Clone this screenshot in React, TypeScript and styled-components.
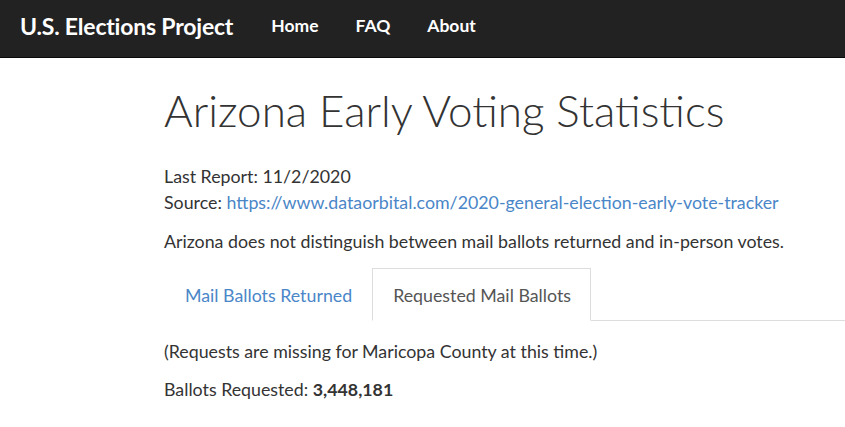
import styled, { createGlobalStyle } from "styled-components";
import { useState } from "react";

const GlobalStyle = createGlobalStyle`
  body {
    margin: 0;
    background: #fff;
    font-family: Lato, "Liberation Sans", sans-serif;
    color: #333;
    overflow: hidden;
  }
`;

const NavBar = styled.nav`
  display: flex;
  align-items: center;
  height: 58px;
  box-sizing: border-box;
  background: #222;
  border-bottom: 1px solid #0a0a0a;
  padding: 0 20px 6px;
`;

const Brand = styled.a`
  color: #fff;
  font-size: 23px;
  font-weight: 700;
  letter-spacing: -0.2px;
  text-decoration: none;
  margin-right: 38px;
`;

const NavLinks = styled.div`
  display: flex;
  gap: 37px;
`;

const NavLink = styled.a`
  color: #fff;
  font-size: 17.5px;
  font-weight: 700;
  text-decoration: none;
`;

const Container = styled.main`
  padding: 28px 0 0 164px;
`;

const Heading = styled.h1`
  margin: 0 0 29px;
  font-size: 44px;
  font-weight: 300;
  line-height: 1.1;
  color: #333;
`;

const Meta = styled.p`
  margin: 0 0 14px;
  font-size: 17.8px;
  line-height: 26px;
`;

const Link = styled.a`
  color: #4a86c8;
  text-decoration: none;
`;

const Note = styled.p`
  margin: 0 0 15px;
  font-size: 17.8px;
  line-height: 24px;
`;

const TabList = styled.ul`
  display: flex;
  list-style: none;
  margin: 0;
  padding: 0;
  border-bottom: 1px solid #ddd;
`;

const Tab = styled.li<{ $active: boolean }>`
  margin-bottom: -1px;
  padding: 13px 19px 12px 20px;
  font-size: 17.8px;
  line-height: 26px;
  border: 1px solid ${(p) => (p.$active ? "#ddd" : "transparent")};
  border-bottom-color: ${(p) => (p.$active ? "#fff" : "transparent")};
  color: ${(p) => (p.$active ? "#555" : "#4a86c8")};
  background: #fff;
  cursor: pointer;
`;

const Panel = styled.section`
  padding-top: 18px;
  font-size: 17.8px;
  line-height: 24px;
`;

const PanelLine = styled.p`
  margin: 0 0 14px;
`;

const tabs = ["Mail Ballots Returned", "Requested Mail Ballots"];

export default function App() {
  const [active, setActive] = useState(1);
  return (
    <>
      <GlobalStyle />
      <NavBar>
        <Brand href="#">U.S. Elections Project</Brand>
        <NavLinks>
          <NavLink href="#">Home</NavLink>
          <NavLink href="#">FAQ</NavLink>
          <NavLink href="#">About</NavLink>
        </NavLinks>
      </NavBar>
      <Container>
        <Heading>Arizona Early Voting Statistics</Heading>
        <Meta>
          Last Report: 11/2/2020
          <br />
          Source:{" "}
          <Link href="#">
            https://www.dataorbital.com/2020-general-election-early-vote-tracker
          </Link>
        </Meta>
        <Note>
          Arizona does not distinguish between mail ballots returned and
          in-person votes.
        </Note>
        <TabList>
          {tabs.map((t, i) => (
            <Tab key={t} $active={active === i} onClick={() => setActive(i)}>
              {t}
            </Tab>
          ))}
        </TabList>
        <Panel>
          <PanelLine>(Requests are missing for Maricopa County at this time.)</PanelLine>
          <PanelLine>
            Ballots Requested: <b>3,448,181</b>
          </PanelLine>
        </Panel>
      </Container>
    </>
  );
}
